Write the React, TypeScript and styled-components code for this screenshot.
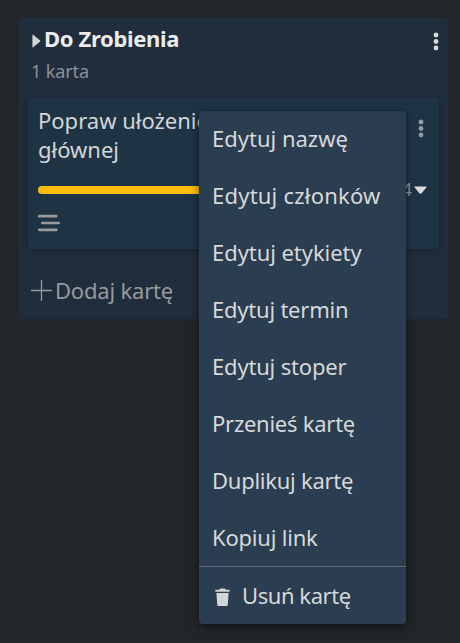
import React from "react";
import styled, { createGlobalStyle } from "styled-components";

const GlobalStyle = createGlobalStyle`
  * { box-sizing: border-box; }
  body {
    margin: 0;
    background: #222529;
    font-family: "Noto Sans", "Open Sans", sans-serif;
    overflow: hidden;
  }
  button {
    border: 0;
    padding: 0;
    background: none;
    font: inherit;
    color: inherit;
    text-align: left;
    white-space: nowrap;
  }
`;

const Board = styled.main`
  height: 643px;
  padding: 18px 12px 0 19px;
`;

const Column = styled.section`
  position: relative;
  height: 301px;
  padding: 0 9px;
  background: #202d3c;
  border-radius: 2px;
`;

const ColumnHeader = styled.header`
  display: flex;
  align-items: flex-start;
  height: 41px;
  padding: 5px 0 0 4px;
`;

const Title = styled.h2`
  flex: 1;
  margin: 0 0 0 3px;
  font-size: 22px;
  line-height: 30px;
  font-weight: 700;
  letter-spacing: -0.34px;
  color: #ececec;
`;

const Collapse = styled.svg`
  width: 9px;
  height: 14px;
  margin-top: 11px;
`;

const Dots = styled.svg`
  width: 6px;
  height: 20px;
  flex: none;
`;

const ColumnDots = styled(Dots)`
  margin-top: 9px;
`;

const Count = styled.div`
  height: 39px;
  padding-left: 3px;
  font-size: 18px;
  line-height: 24px;
  letter-spacing: -0.1px;
  color: #8f9193;
`;

const Card = styled.article`
  height: 151px;
  padding: 8px 10px 0;
  border-radius: 3px;
  background: #1e3445;
  box-shadow: 0 1px 4px rgba(0, 0, 0, 0.25);
`;

const CardTop = styled.div`
  display: flex;
  justify-content: space-between;
  height: 80px;
`;

const CardName = styled.div`
  width: 290px;
  font-size: 22px;
  line-height: 29px;
  letter-spacing: 0;
  color: #d3d5d6;
`;

const CardDots = styled(Dots)`
  margin: 13px 5px 0 0;
`;

const ProgressRow = styled.div`
  display: flex;
  align-items: center;
  height: 8px;
`;

const Track = styled.div`
  width: 310px;
  height: 8px;
  border-radius: 4px;
  background: #fdbd0c;
`;

const Tasks = styled.span`
  flex: 1;
  margin-top: -2px;
  text-align: right;
  font-size: 18px;
  line-height: 20px;
  color: #8f9193;
`;

const Caret = styled.svg`
  width: 13px;
  height: 8px;
  margin: -1px 2px 0 2px;
`;

const Description = styled.svg`
  display: block;
  width: 23px;
  height: 18px;
  margin-top: 20px;
`;

const AddCard = styled.button`
  display: flex;
  align-items: center;
  height: 30px;
  margin: 26px 0 0 3px;
  font-size: 22px;
  line-height: 30px;
  letter-spacing: -0.2px;
  color: #97999b;
`;

const Plus = styled.svg`
  width: 21px;
  height: 21px;
  margin: 1px 3px 0 0;
`;

const Menu = styled.nav`
  position: absolute;
  left: 180px;
  top: 93px;
  width: 207px;
  height: 513px;
  border-radius: 4px;
  background: #2b3d50;
  box-shadow: 0 2px 8px rgba(0, 0, 0, 0.55);
  display: flex;
  flex-direction: column;
`;

const MenuItem = styled.button<{ $spacing?: number }>`
  display: flex;
  align-items: center;
  flex: 1;
  padding: 0 0 2px 13px;
  font-size: 22px;
  line-height: 30px;
  letter-spacing: ${(p) => p.$spacing ?? 0}px;
  color: #d6d8d9;
`;

const DeleteItem = styled(MenuItem)`
  flex: none;
  height: 58px;
  border-top: 1px solid #626970;
`;

const Trash = styled.svg`
  width: 15px;
  height: 18px;
  margin: 4px 12px 0 3px;
`;

const items: { label: string; spacing: number }[] = [
  { label: "Edytuj nazwę", spacing: 0 },
  { label: "Edytuj członków", spacing: 0.22 },
  { label: "Edytuj etykiety", spacing: -0.06 },
  { label: "Edytuj termin", spacing: -0.22 },
  { label: "Edytuj stoper", spacing: -0.18 },
  { label: "Przenieś kartę", spacing: -0.26 },
  { label: "Duplikuj kartę", spacing: -0.26 },
  { label: "Kopiuj link", spacing: -0.2 },
];

function DotShapes({ color }: { color: string }) {
  return (
    <g fill={color}>
      <circle cx="3" cy="3" r="2.4" />
      <circle cx="3" cy="9.5" r="2.4" />
      <circle cx="3" cy="16" r="2.4" />
    </g>
  );
}

export default function App() {
  return (
    <>
      <GlobalStyle />
      <Board>
        <Column>
          <ColumnHeader>
            <Collapse viewBox="0 0 9 14">
              <path d="M.4 1.2Q.4 0 1.4.9L7.9 6.2q.9.8 0 1.6l-6.5 5.3q-1 .9-1-.3Z" fill="#d4d5d6" />
            </Collapse>
            <Title>Do Zrobienia</Title>
            <ColumnDots viewBox="0 0 6 20"><DotShapes color="#dadada" /></ColumnDots>
          </ColumnHeader>
          <Count>1 karta</Count>
          <Card>
            <CardTop>
              <CardName>Popraw ułożenie strony głównej</CardName>
              <CardDots viewBox="0 0 6 20"><DotShapes color="#97999b" /></CardDots>
            </CardTop>
            <ProgressRow>
              <Track />
              <Tasks>0/4</Tasks>
              <Caret viewBox="0 0 12 8" preserveAspectRatio="none">
                <path d="M1 .5h10q1.2 0 .4 1L7 7.2q-1 1-2 0L.6 1.5Q-.2.5 1 .5Z" fill="#dadada" />
              </Caret>
            </ProgressRow>
            <Description viewBox="0 0 23 18">
              <path d="M1.3 2.2h17M4.3 9h16.5M1.3 15.8h17" stroke="#989a9c" strokeWidth="2.7" strokeLinecap="round" />
            </Description>
          </Card>
          <AddCard>
            <Plus viewBox="0 0 21 21">
              <path d="M0 10.5h21M10.5 0v21" stroke="#97999b" strokeWidth="1.3" />
            </Plus>
            Dodaj kartę
          </AddCard>
          <Menu>
            {items.map((item) => (
              <MenuItem key={item.label} $spacing={item.spacing}>{item.label}</MenuItem>
            ))}
            <DeleteItem $spacing={-0.44}>
              <Trash viewBox="0 0 16 18" preserveAspectRatio="none">
                <path d="M.4 1.7h4.1L5.4.6h5.2l.9 1.1h4.1v2H.4ZM1.5 5h13l-.9 12q-.1 1-1.1 1h-9q-1 0-1.1-1Z" fill="#d3d5d6" />
              </Trash>
              Usuń kartę
            </DeleteItem>
          </Menu>
        </Column>
      </Board>
    </>
  );
}
